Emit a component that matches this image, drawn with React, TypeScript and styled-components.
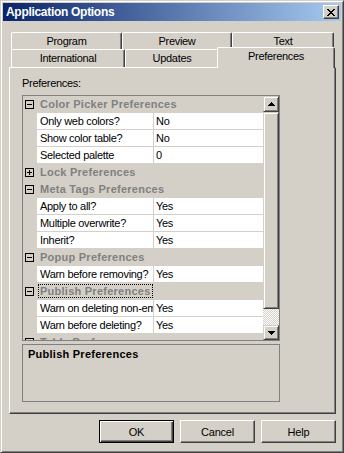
import React from 'react';
import styled, { createGlobalStyle } from 'styled-components';

const Global = createGlobalStyle`
  html, body { margin: 0; padding: 0; background: #D4D0C8; }
  body { font-family: "Liberation Sans", Arial, sans-serif; font-size: 11px; color: #000; }
  * { box-sizing: border-box; }
`;

const Window = styled.div`
  width: 344px;
  height: 453px;
  background: #D4D0C8;
  border: 1px solid;
  border-color: #D4D0C8 #404040 #404040 #D4D0C8;
  box-shadow: inset 1px 1px 0 #fff, inset -1px -1px 0 #808080;
  padding: 2px;
  display: flex;
  flex-direction: column;
`;

const TitleBar = styled.div`
  height: 18px;
  flex: none;
  background: linear-gradient(to right, #0A246A, #A6CAF0);
  display: flex;
  align-items: center;
  justify-content: space-between;
  padding: 0 2px 0 3px;
`;

const TitleText = styled.span`
  color: #fff;
  font-weight: bold;
  font-size: 12px;
  letter-spacing: -0.3px;
  line-height: 14px;
`;

const CloseButton = styled.div`
  width: 16px;
  height: 14px;
  background: #D4D0C8;
  border: 1px solid;
  border-color: #fff #404040 #404040 #fff;
  box-shadow: inset -1px -1px 0 #808080;
  display: flex;
  align-items: center;
  justify-content: center;
  padding-right: 1px;
`;

const Body = styled.div`
  flex: 1;
  display: flex;
  flex-direction: column;
  padding: 11px 5px 0 6px;
`;

const TabRow = styled.div`
  display: flex;
  align-items: flex-start;
  padding-left: 2px;
  height: ${(p: { h: number }) => p.h}px;
  position: relative;
  z-index: ${(p: { h: number; front?: boolean }) => (p.front ? 1 : 0)};
`;

const Tab = styled.div<{ w: number; h: number; selected?: boolean }>`
  width: ${(p) => p.w}px;
  height: ${(p) => p.h}px;
  flex: none;
  background: #D4D0C8;
  border-top: 1px solid #fff;
  border-left: 1px solid #fff;
  border-right: 1px solid #404040;
  border-radius: 2px 2px 0 0;
  box-shadow: inset -1px 0 0 #808080;
  display: flex;
  align-items: center;
  justify-content: center;
  letter-spacing: -0.3px;
  line-height: 13px;
  padding-bottom: ${(p) => (p.selected ? 3 : 0)}px;
  ${(p) =>
    p.selected &&
    `
    margin: -2px 0 -1px -2px;
    position: relative;
    z-index: 2;
  `}
`;

const Panel = styled.div`
  height: 347px;
  flex: none;
  border: 1px solid;
  border-color: #fff #404040 #404040 #fff;
  box-shadow: inset -1px -1px 0 #808080;
  padding: 8px 0 0 12px;
  display: flex;
  flex-direction: column;
`;

const Label = styled.div`
  height: 14px;
  line-height: 14px;
  letter-spacing: -0.3px;
  margin-bottom: 5px;
`;

const Grid = styled.div`
  width: 258px;
  height: 246px;
  border: 1px solid #808080;
  display: flex;
  background: #D4D0C8;
  flex: none;
`;

const Rows = styled.div`
  width: 240px;
  height: 244px;
  overflow: hidden;
  display: flex;
  flex-direction: column;
`;

const Row = styled.div`
  height: 17px;
  flex: none;
  display: flex;
  padding-bottom: 1px;
`;

const Gutter = styled.div`
  width: 14px;
  flex: none;
  display: flex;
  align-items: center;
  padding-left: 2px;
`;

const NameCell = styled.div`
  width: 116px;
  flex: none;
  background: #fff;
  margin-right: 1px;
  padding-left: 3px;
  overflow: hidden;
  white-space: nowrap;
  line-height: 16px;
  letter-spacing: -0.3px;
`;

const ValueCell = styled.div`
  width: 109px;
  flex: none;
  background: #fff;
  padding-left: 2px;
  white-space: nowrap;
  overflow: hidden;
  line-height: 16px;
  letter-spacing: -0.3px;
`;

const HeaderCell = styled.div`
  flex: 1;
  display: flex;
  align-items: center;
  white-space: nowrap;
`;

const HeaderLabel = styled.span<{ focused?: boolean }>`
  display: inline-block;
  margin-left: 1px;
  padding: 0 1px;
  height: 14px;
  line-height: 12px;
  border: 1px dotted ${(p) => (p.focused ? '#000' : 'transparent')};
  color: #808080;
  font-weight: bold;
  letter-spacing: 0.25px;
`;

const ScrollBar = styled.div`
  width: 16px;
  flex: none;
  display: flex;
  flex-direction: column;
`;

const ScrollButton = styled.div<{ h: number }>`
  height: ${(p) => p.h}px;
  flex: none;
  background: #D4D0C8;
  border: 1px solid;
  border-color: #D4D0C8 #404040 #404040 #D4D0C8;
  box-shadow: inset 1px 1px 0 #fff, inset -1px -1px 0 #808080;
  display: flex;
  align-items: center;
  justify-content: center;
`;

const Track = styled.div`
  height: 16px;
  flex: none;
  background: repeating-conic-gradient(#D4D0C8 0 25%, #fff 0 50%) 0 0 / 2px 2px;
`;

const Description = styled.div`
  width: 258px;
  height: 58px;
  margin-top: 3px;
  border: 1px solid #808080;
  padding: 3px 5px;
  font-weight: bold;
  line-height: 13px;
  letter-spacing: 0.25px;
  flex: none;
`;

const ButtonRow = styled.div`
  display: flex;
  justify-content: flex-end;
  gap: 6px;
  margin-top: 6px;
`;

const Button = styled.div<{ isDefault?: boolean }>`
  width: 75px;
  height: 23px;
  background: #D4D0C8;
  display: flex;
  align-items: center;
  justify-content: center;
  letter-spacing: -0.2px;
  border: 1px solid;
  ${(p) =>
    p.isDefault
      ? `border-color: #000;
         box-shadow: inset 1px 1px 0 #fff, inset -1px -1px 0 #404040, inset -2px -2px 0 #808080;`
      : `border-color: #fff #404040 #404040 #fff;
         box-shadow: inset -1px -1px 0 #808080;`}
`;

const CloseGlyph = () => {
  const rows = [
    [0, 1, 6, 7],
    [1, 2, 5, 6],
    [2, 3, 4, 5],
    [3, 4],
    [2, 3, 4, 5],
    [1, 2, 5, 6],
    [0, 1, 6, 7],
  ];
  return (
    <svg width="8" height="7" viewBox="0 0 8 7" shapeRendering="crispEdges">
      {rows.map((xs, y) => xs.map((x) => <rect key={`${x}-${y}`} x={x} y={y} width="1" height="1" fill="#000" />))}
    </svg>
  );
};

const Arrow = ({ down }: { down?: boolean }) => (
  <svg width="7" height="4" viewBox="0 0 7 4" shapeRendering="crispEdges">
    {[1, 3, 5, 7].map((w, i) => (
      <rect key={i} x={(7 - w) / 2} y={down ? 3 - i : i} width={w} height="1" fill="#000" />
    ))}
  </svg>
);

const ExpandBox = ({ open }: { open: boolean }) => (
  <svg width="9" height="9" viewBox="0 0 9 9" shapeRendering="crispEdges">
    <rect x="0.5" y="0.5" width="8" height="8" fill="none" stroke="#000" />
    <rect x="2" y="4" width="5" height="1" fill="#000" />
    {!open && <rect x="4" y="2" width="1" height="5" fill="#000" />}
  </svg>
);

type Item =
  | { kind: 'cat'; name: string; open: boolean; focused?: boolean }
  | { kind: 'prop'; name: string; value: string };

const items: Item[] = [
  { kind: 'cat', name: 'Color Picker Preferences', open: true },
  { kind: 'prop', name: 'Only web colors?', value: 'No' },
  { kind: 'prop', name: 'Show color table?', value: 'No' },
  { kind: 'prop', name: 'Selected palette', value: '0' },
  { kind: 'cat', name: 'Lock Preferences', open: false },
  { kind: 'cat', name: 'Meta Tags Preferences', open: true },
  { kind: 'prop', name: 'Apply to all?', value: 'Yes' },
  { kind: 'prop', name: 'Multiple overwrite?', value: 'Yes' },
  { kind: 'prop', name: 'Inherit?', value: 'Yes' },
  { kind: 'cat', name: 'Popup Preferences', open: true },
  { kind: 'prop', name: 'Warn before removing?', value: 'Yes' },
  { kind: 'cat', name: 'Publish Preferences', open: true, focused: true },
  { kind: 'prop', name: 'Warn on deleting non-empty folder?', value: 'Yes' },
  { kind: 'prop', name: 'Warn before deleting?', value: 'Yes' },
  { kind: 'cat', name: 'Table Preferences', open: true },
];

export default function App() {
  return (
    <>
      <Global />
      <Window>
        <TitleBar>
          <TitleText>Application Options</TitleText>
          <CloseButton>
            <CloseGlyph />
          </CloseButton>
        </TitleBar>
        <Body>
          <TabRow h={17}>
            <Tab w={111} h={17}>Program</Tab>
            <Tab w={110} h={17}>Preview</Tab>
            <Tab w={102} h={17}>Text</Tab>
          </TabRow>
          <TabRow h={18} front>
            <Tab w={114} h={18}>International</Tab>
            <Tab w={94} h={18}>Updates</Tab>
            <Tab w={118} h={21} selected>Preferences</Tab>
          </TabRow>
          <Panel>
            <Label>Preferences:</Label>
            <Grid>
              <Rows>
                {items.map((it, i) =>
                  it.kind === 'cat' ? (
                    <Row key={i}>
                      <Gutter>
                        <ExpandBox open={it.open} />
                      </Gutter>
                      <HeaderCell>
                        <HeaderLabel focused={it.focused}>{it.name}</HeaderLabel>
                      </HeaderCell>
                    </Row>
                  ) : (
                    <Row key={i}>
                      <Gutter />
                      <NameCell>{it.name}</NameCell>
                      <ValueCell>{it.value}</ValueCell>
                    </Row>
                  )
                )}
              </Rows>
              <ScrollBar>
                <ScrollButton h={16}>
                  <Arrow />
                </ScrollButton>
                <ScrollButton h={197} />
                <Track />
                <ScrollButton h={15}>
                  <Arrow down />
                </ScrollButton>
              </ScrollBar>
            </Grid>
            <Description>Publish Preferences</Description>
          </Panel>
          <ButtonRow>
            <Button isDefault>OK</Button>
            <Button>Cancel</Button>
            <Button>Help</Button>
          </ButtonRow>
        </Body>
      </Window>
    </>
  );
}
